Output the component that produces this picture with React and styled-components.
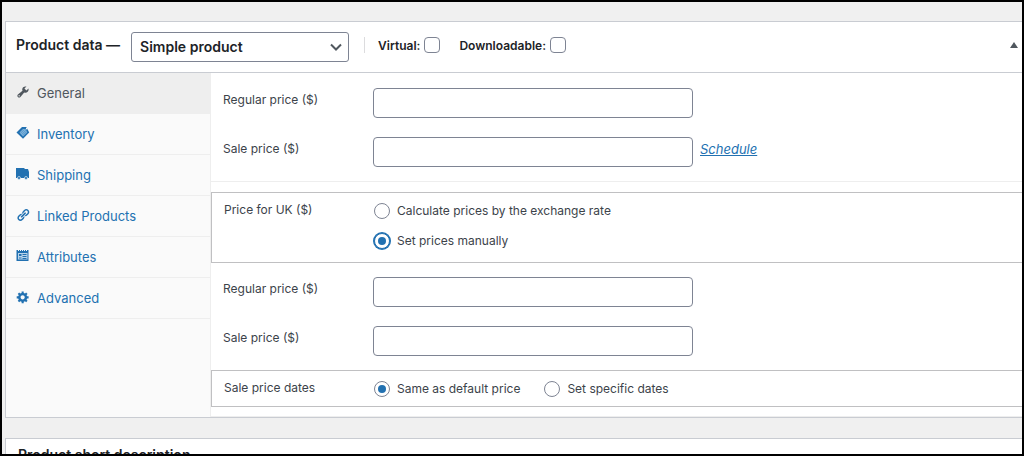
import React, { useState } from "react";
import styled, { createGlobalStyle, css } from "styled-components";

const GlobalStyle = createGlobalStyle`
  *, *::before, *::after {
    box-sizing: border-box;
  }
  body {
    margin: 0;
    background: #f0f0f0;
    color: #3c434a;
    font-family: Inter, "Liberation Sans", sans-serif;
    font-size: 12px;
  }
  button, input, select {
    font-family: inherit;
  }
`;

const Screen = styled.div`
  height: 100vh;
  padding: 19px 0 0 3px;
  overflow: hidden;
  border: 2px solid #000;
  background: #f0f0f0;
`;

const Panel = styled.section`
  margin-bottom: 20px;
  background: #fff;
  border: 1px solid #c9ccd2;
  border-right: 0;
`;

const PanelHeader = styled.header`
  display: flex;
  align-items: center;
  height: 51px;
  padding: 0 4px 4px 10px;
  border-bottom: 1px solid #c9ccd2;
`;

const PanelTitle = styled.h2`
  margin: 0;
  color: #1d2327;
  font-size: 14px;
  line-height: 20px;
  font-weight: 600;
  white-space: nowrap;
`;

const NextTitle = styled(PanelTitle)`
  padding: 6px 12px;
`;

const SelectWrap = styled.div`
  display: grid;
  align-items: center;
  flex: 0 0 218px;
  margin: 3px 15px 0 11px;
  & > * {
    grid-area: 1 / 1;
  }
  & > svg {
    justify-self: end;
    margin-right: 7px;
    pointer-events: none;
  }
`;

const TypeSelect = styled.select`
  width: 100%;
  height: 30px;
  padding: 0 24px 0 8px;
  appearance: none;
  border: 1px solid #7e8493;
  border-radius: 3px;
  background: #fff;
  color: #1d2327;
  font-size: 14px;
  font-weight: 600;
`;

const CheckLabel = styled.label`
  display: flex;
  align-items: center;
  gap: 4px;
  margin-right: 19px;
  color: #1d2327;
  font-weight: 600;
  white-space: nowrap;
`;

const CheckGroup = styled.div`
  display: flex;
  align-items: center;
  height: 16px;
  padding-left: 13px;
  border-left: 1px solid #dcdcde;
`;

const Checkbox = styled.input`
  width: 16px;
  height: 16px;
  margin: 0;
  appearance: none;
  border: 1px solid #7e8493;
  border-radius: 4px;
  background: #fff;
  &:checked {
    background: #2271b1;
  }
`;

const Toggle = styled.button`
  display: flex;
  margin-left: auto;
  padding: 0;
  border: 0;
  background: none;
  color: #50575e;
`;

const PanelBody = styled.div`
  display: flex;
`;

const Tabs = styled.nav`
  flex: 0 0 205px;
  background: #fafafa;
  border-right: 1px solid #eee;
`;

const Tab = styled.a`
  display: flex;
  align-items: center;
  gap: 7px;
  height: 41px;
  padding: 0 10px;
  border-bottom: 1px solid #eee;
  color: #2271b1;
  font-size: 13px;
  text-decoration: none;
  ${({ $active }) =>
    $active &&
    css`
      background: #eee;
      color: #50575e;
    `}
  & > svg {
    flex: none;
    margin-bottom: 2px;
  }
`;

const Options = styled.form`
  flex: 1;
  min-width: 0;
  padding-bottom: 9px;
  border-bottom: 1px solid #eee;
`;

const FieldGroup = styled.div`
  display: flex;
  flex-direction: column;
  gap: 19px;
  padding: ${({ $top }) => $top}px 12px 14px;
`;

const Separator = styled.hr`
  margin: 0 0 10px;
  border: 0;
  border-top: 1px solid #eee;
`;

const Field = styled.div`
  display: flex;
  align-items: flex-start;
`;

const FieldLabel = styled.label`
  flex: 0 0 150px;
  line-height: 24px;
`;

const TextInput = styled.input`
  width: 320px;
  height: 30px;
  padding: 0 8px;
  border: 1px solid #7e8493;
  border-radius: 4px;
  background: #fff;
  font-size: 13px;
`;

const Schedule = styled.a`
  margin-left: 7px;
  color: #2271b1;
  font-size: 13px;
  font-style: italic;
  line-height: 24px;
`;

const RadioBox = styled.fieldset`
  display: flex;
  min-width: 0;
  margin: 0;
  padding: 5px 12px ${({ $bottom }) => $bottom}px;
  border: 1px solid #c0c0c2;
  border-right: 0;
`;

const RadioTitle = styled.div`
  flex: 0 0 150px;
  line-height: 24px;
`;

const RadioList = styled.div`
  display: flex;
  flex-direction: ${({ $inline }) => ($inline ? "row" : "column")};
  gap: ${({ $inline }) => ($inline ? "4px 24px" : "4px")};
`;

const RadioLabel = styled.label`
  display: flex;
  align-items: center;
  gap: 7px;
  height: 26px;
  line-height: 24px;
`;

const Radio = styled.input`
  display: grid;
  place-content: center;
  width: 16px;
  height: 16px;
  margin: 0;
  appearance: none;
  border: 1px solid #7e8493;
  border-radius: 50%;
  background: #fff;
  ${({ $ring }) =>
    $ring &&
    css`
      border-color: #2271b1;
      box-shadow: 0 0 0 1px #2271b1;
    `}
  &:checked::before {
    content: "";
    width: 8px;
    height: 8px;
    border-radius: 50%;
    background: #2271b1;
  }
`;

const WrenchIcon = () => (
  <svg width="14" height="14" viewBox="0 0 20 20" fill="currentColor">
    <path d="M16.68 9.77c-1.34 1.34-3.3 1.67-4.95.99l-5.41 6.52c-.99.99-2.59.99-3.58 0s-.99-2.59 0-3.57l6.52-5.42c-.68-1.65-.35-3.61.99-4.95 1.28-1.28 3.12-1.62 4.72-1.06l-2.89 2.89 2.82 2.82 2.86-2.87c.53 1.58.18 3.39-1.08 4.65zM3.81 16.21c.4.39 1.04.39 1.43 0 .4-.4.4-1.04 0-1.43-.39-.4-1.03-.4-1.43 0-.39.39-.39 1.03 0 1.43z" />
  </svg>
);

const TagIcon = () => (
  <svg width="14" height="14" viewBox="0 0 14 14" fill="currentColor">
    <path d="M.5 6.500 6 1h4.500L13.200 6.500 7 12.800z" />
    <path d="M3.500 6.500 7 3h2.700l1.500 3.500L7 10.500z" fill="#7fb2da" />
    <path d="m4.800 7 3.500-3.500M6 8.200l4-4M7 9.300l3.800-3.800" stroke="#4c93c9" strokeWidth=".8" />
    <circle cx="10.800" cy="2.500" r=".9" fill="#fafafa" />
  </svg>
);

const TruckIcon = () => (
  <svg width="14" height="14" viewBox="0 0 14 14" fill="currentColor">
    <path d="M0 1h8.500v1H12l1 3v6H0z" />
    <circle cx="3" cy="11" r="1.500" stroke="#fafafa" strokeWidth=".6" />
    <circle cx="10" cy="11" r="1.500" stroke="#fafafa" strokeWidth=".6" />
  </svg>
);

const LinkIcon = () => (
  <svg width="14" height="14" viewBox="0 0 20 20" fill="currentColor">
    <path d="M17.74 2.76c1.68 1.69 1.68 4.41 0 6.1l-1.53 1.52c-1.12 1.12-2.7 1.47-4.14 1.09l2.62-2.61.76-.77.76-.76c.84-.84.84-2.2 0-3.04-.84-.85-2.2-.85-3.04 0l-.77.76-3.38 3.38c-.37-1.44-.02-3.02 1.1-4.14l1.52-1.53c1.69-1.68 4.42-1.68 6.1 0zM8.59 13.43l5.34-5.34c.42-.42.42-1.1 0-1.52-.44-.43-1.13-.39-1.53 0l-5.33 5.34c-.42.42-.42 1.1 0 1.52.44.43 1.13.39 1.52 0zm-.76 2.29l4.14-4.15c.38 1.44.03 3.02-1.09 4.14l-1.52 1.53c-1.69 1.68-4.41 1.68-6.1 0-1.68-1.68-1.68-4.42 0-6.1l1.53-1.52c1.12-1.12 2.7-1.47 4.14-1.1l-4.14 4.15c-.85.84-.85 2.2 0 3.05.84.84 2.2.84 3.04 0z" />
  </svg>
);

const AttributesIcon = () => (
  <svg width="14" height="14" viewBox="0 0 14 14" fill="currentColor">
    <path d="M.5 1h1.500v1h1V1h1v1h1V1h1v1h1V1h1v1h1V1h1v1h1V1H12.500v11H.5z" />
    <path d="M2 4h9.500v6.500H2z" fill="#b9d4ea" />
    <path d="M3 5h2.500v2H3zM6.500 5h4v1h-4zM6.500 7h4v1h-4zM3 8.500h2.500v1H3zM6.500 9h4v1h-4z" />
  </svg>
);

const GearIcon = () => (
  <svg width="14" height="14" viewBox="0 0 20 20" fill="currentColor">
    <path d="M18 12h-2.180c-.17.7-.44 1.350-.81 1.930l1.540 1.540-2.100 2.100-1.540-1.540c-.58.36-1.230.63-1.910.79V19H8v-2.180c-.68-.16-1.330-.43-1.910-.79l-1.540 1.540-2.120-2.120 1.540-1.540c-.36-.58-.63-1.230-.79-1.910H1V9.030h2.170c.16-.7.44-1.350.8-1.940L2.430 5.550l2.100-2.100 1.540 1.540c.58-.37 1.240-.64 1.930-.81V2h3v2.180c.68.16 1.330.43 1.910.79l1.540-1.540 2.120 2.120-1.540 1.540c.36.59.64 1.240.8 1.940H18V12zm-8.500 1.500c1.660 0 3-1.340 3-3s-1.340-3-3-3-3 1.340-3 3 1.340 3 3 3z" />
  </svg>
);

const tabs = [
  { id: "general", label: "General", Icon: WrenchIcon },
  { id: "inventory", label: "Inventory", Icon: TagIcon },
  { id: "shipping", label: "Shipping", Icon: TruckIcon },
  { id: "linked", label: "Linked Products", Icon: LinkIcon },
  { id: "attributes", label: "Attributes", Icon: AttributesIcon },
  { id: "advanced", label: "Advanced", Icon: GearIcon },
];

const PriceField = ({ id, label, children }) => (
  <Field>
    <FieldLabel htmlFor={id}>{label}</FieldLabel>
    <TextInput id={id} type="text" />
    {children}
  </Field>
);

const RadioOption = ({ name, value, current, onChange, ring, children }) => (
  <RadioLabel>
    <Radio
      type="radio"
      name={name}
      value={value}
      checked={current === value}
      onChange={() => onChange(value)}
      $ring={ring && current === value}
    />
    {children}
  </RadioLabel>
);

const App = () => {
  const [pricing, setPricing] = useState("manual");
  const [dates, setDates] = useState("default");

  return (
    <>
      <GlobalStyle />
      <Screen>
        <Panel>
          <PanelHeader>
            <PanelTitle>Product data —</PanelTitle>
            <SelectWrap>
              <TypeSelect aria-label="Product type" defaultValue="simple">
                <option value="simple">Simple product</option>
              </TypeSelect>
              <svg width="12" height="8" viewBox="0 0 12 8" fill="none">
                <path d="m1 1.500 5 5 5-5" stroke="#50575e" strokeWidth="2" />
              </svg>
            </SelectWrap>
            <CheckGroup>
              <CheckLabel>
                Virtual:
                <Checkbox type="checkbox" />
              </CheckLabel>
              <CheckLabel>
                Downloadable:
                <Checkbox type="checkbox" />
              </CheckLabel>
            </CheckGroup>
            <Toggle type="button" aria-label="Toggle panel">
              <svg width="8" height="6" viewBox="0 0 8 6" fill="currentColor">
                <path d="M4 0 8 6H0z" />
              </svg>
            </Toggle>
          </PanelHeader>

          <PanelBody>
            <Tabs>
              {tabs.map(({ id, label, Icon }) => (
                <Tab key={id} href={`#${id}`} $active={id === "general"}>
                  <Icon />
                  {label}
                </Tab>
              ))}
            </Tabs>

            <Options>
              <FieldGroup $top={15}>
                <PriceField id="regular" label="Regular price ($)" />
                <PriceField id="sale" label="Sale price ($)">
                  <Schedule href="#schedule">Schedule</Schedule>
                </PriceField>
              </FieldGroup>
              <Separator />

              <RadioBox $bottom={8} aria-labelledby="uk-title">
                <RadioTitle id="uk-title">Price for UK ($)</RadioTitle>
                <RadioList>
                  <RadioOption name="pricing" value="rate" current={pricing} onChange={setPricing} ring>
                    Calculate prices by the exchange rate
                  </RadioOption>
                  <RadioOption name="pricing" value="manual" current={pricing} onChange={setPricing} ring>
                    Set prices manually
                  </RadioOption>
                </RadioList>
              </RadioBox>

              <FieldGroup $top={14}>
                <PriceField id="uk-regular" label="Regular price ($)" />
                <PriceField id="uk-sale" label="Sale price ($)" />
              </FieldGroup>

              <RadioBox $bottom={4} aria-labelledby="dates-title">
                <RadioTitle id="dates-title">Sale price dates</RadioTitle>
                <RadioList $inline>
                  <RadioOption name="dates" value="default" current={dates} onChange={setDates}>
                    Same as default price
                  </RadioOption>
                  <RadioOption name="dates" value="specific" current={dates} onChange={setDates}>
                    Set specific dates
                  </RadioOption>
                </RadioList>
              </RadioBox>
            </Options>
          </PanelBody>
        </Panel>

        <Panel>
          <NextTitle>Product short description</NextTitle>
        </Panel>
      </Screen>
    </>
  );
};

export default App;
